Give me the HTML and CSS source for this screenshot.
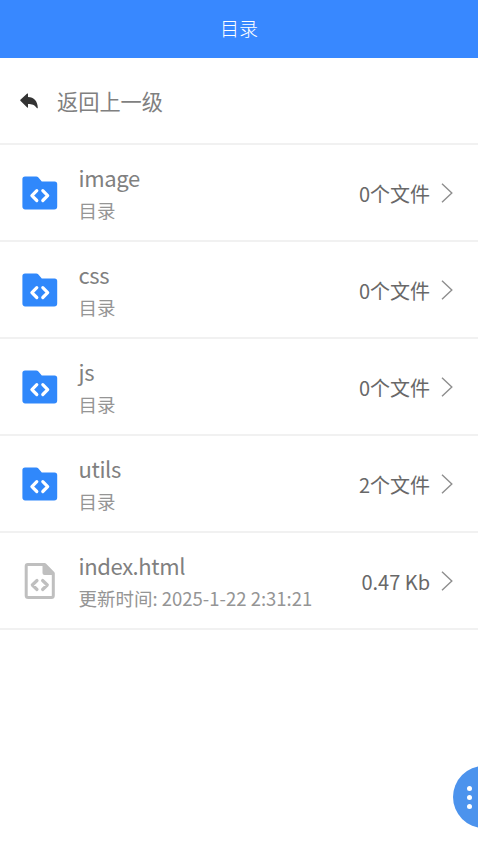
FILE: index.html
```html
<!DOCTYPE html>
<html lang="zh-CN">
<head>
<meta charset="utf-8">
<meta name="viewport" content="width=device-width, initial-scale=1">
<title>目录</title>
<link rel="stylesheet" href="styles.css">
</head>
<body>
<svg class="defs" aria-hidden="true">
  <symbol id="folder" viewBox="0 0 36 34">
    <path fill="#3088fb" d="M3 .4h11.200a3 3 0 0 1 2.200 1L19.800 5.400H32.600a2.600 2.600 0 0 1 2.600 2.600V30.400a3 3 0 0 1-3 3H3.200A2.800 2.800 0 0 1 .4 30.600V3A2.600 2.600 0 0 1 3 .4z"/>
    <path class="code" stroke="#fff" d="M14.800 14.700l-4.900 4.900L14.800 24.500M20.800 14.700l4.900 4.900L20.800 24.500"/>
  </symbol>
  <symbol id="chevron" viewBox="0 0 12 20">
    <path fill="none" stroke="#8e8e8e" stroke-width="1.400" d="M1 .8l9.800 9.200L1 19.200"/>
  </symbol>
</svg>
<header class="header">目录</header>
<main>
  <a class="back">
    <svg class="back-icon" viewBox="0 0 18 16"><path fill="#333" d="M.4 7.700Q0 7.200.4 6.700L7.200.6Q8 0 8 1V4.100C14 4.300 17.700 8.300 17.800 15Q17.300 15.600 16.800 14.900C14.500 11.600 12 10.900 8 10.900V14Q8 15 7.200 14.400z"/></svg>
    <span class="back-label">返回上一级</span>
  </a>
  <ul class="list">
    <li class="row">
      <svg class="icon"><use href="#folder"/></svg>
      <div class="info"><div class="name">image</div><div class="desc">目录</div></div>
      <span class="meta">0个文件</span><svg class="chevron"><use href="#chevron"/></svg>
    </li>
    <li class="row">
      <svg class="icon"><use href="#folder"/></svg>
      <div class="info"><div class="name">css</div><div class="desc">目录</div></div>
      <span class="meta">0个文件</span><svg class="chevron"><use href="#chevron"/></svg>
    </li>
    <li class="row">
      <svg class="icon"><use href="#folder"/></svg>
      <div class="info"><div class="name">js</div><div class="desc">目录</div></div>
      <span class="meta">0个文件</span><svg class="chevron"><use href="#chevron"/></svg>
    </li>
    <li class="row">
      <svg class="icon"><use href="#folder"/></svg>
      <div class="info"><div class="name">utils</div><div class="desc">目录</div></div>
      <span class="meta">2个文件</span><svg class="chevron"><use href="#chevron"/></svg>
    </li>
    <li class="row">
      <svg class="icon file" viewBox="0 0 36 38">
        <path fill="none" stroke="#bfbfbf" stroke-width="3" stroke-linejoin="round" d="M5.700 2.500H22.800L31.300 11.200V33.500a2 2 0 0 1-2 2H6.200a2 2 0 0 1-2-2V4a1.500 1.500 0 0 1 1.500-1.500z"/>
        <path fill="#bfbfbf" d="M20.500 2h3L32 10.500V13H22.500a2 2 0 0 1-2-2z"/>
        <path class="code" stroke="#bfbfbf" d="M15 18.500L10.300 23l4.700 4.500M20.600 18.500L25.300 23l-4.700 4.500"/>
      </svg>
      <div class="info"><div class="name">index.html</div><div class="desc">更新时间: 2025-1-22 2:31:21</div></div>
      <span class="meta">0.47 Kb</span><svg class="chevron"><use href="#chevron"/></svg>
    </li>
  </ul>
</main>
<button class="fab" aria-label="更多"><i></i><i></i><i></i></button>
</body>
</html>
```
FILE: styles.css
```css
* {
  box-sizing: border-box;
}

body {
  margin: 0;
  min-height: 850px;
  overflow: hidden;
  background: #fff;
  font-family: "Noto Sans CJK SC", sans-serif;
}

.defs {
  display: none;
}

.header {
  height: 58px;
  background: #3888ff;
  color: #fff;
  font-size: 19px;
  font-weight: 300;
  line-height: 56px;
  text-align: center;
}

.back {
  display: flex;
  align-items: center;
  height: 87px;
  padding-left: 20px;
  border-bottom: 2px solid #f1f1f1;
  color: #808080;
  font-size: 21.2px;
}

.back-label {
  padding-bottom: 1px;
}

.back-icon {
  width: 18px;
  height: 16px;
  margin-right: 19px;
}

.list {
  margin: 0;
  padding: 0;
  list-style: none;
}

.row {
  display: flex;
  align-items: center;
  height: 97px;
  padding: 0 25px 0 22px;
  border-bottom: 2px solid #f1f1f1;
}

.icon {
  width: 36px;
  height: 34px;
  margin-right: 20.5px;
}

.file {
  height: 38px;
}

.code {
  fill: none;
  stroke-width: 3.2;
  stroke-linecap: round;
  stroke-linejoin: round;
}

.info {
  flex: 1;
}

.name {
  color: #808080;
  font-size: 22px;
  letter-spacing: -0.36px;
  line-height: 34px;
}

.desc {
  color: #959595;
  font-size: 18.5px;
  line-height: 32px;
}

.meta {
  padding-top: 2px;
  color: #686868;
  font-size: 20px;
}

.chevron {
  width: 12px;
  height: 20px;
  margin-left: 11px;
}

.fab {
  position: fixed;
  top: 766px;
  left: 453px;
  display: flex;
  flex-direction: column;
  align-items: center;
  justify-content: center;
  gap: 4px;
  width: 62px;
  height: 62px;
  padding: 0 29px 0 0;
  border: 0;
  border-radius: 50%;
  background: #4c93ed;
}

.fab i {
  width: 5px;
  height: 5px;
  border-radius: 50%;
  background: #fff;
}
```
